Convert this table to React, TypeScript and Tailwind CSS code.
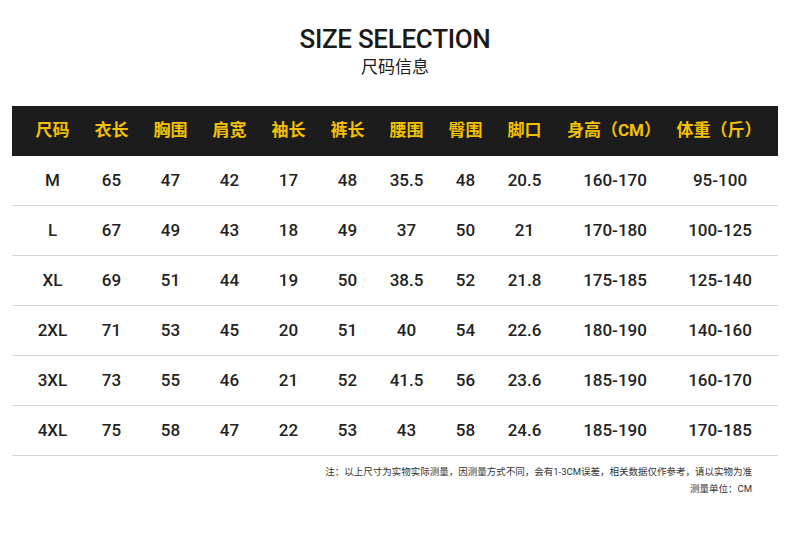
import React from "react";

const headers = ["尺码", "衣长", "胸围", "肩宽", "袖长", "裤长", "腰围", "臀围", "脚口", "身高（CM）", "体重（斤）"];
const rows = [
  ["M", "65", "47", "42", "17", "48", "35.5", "48", "20.5", "160-170", "95-100"],
  ["L", "67", "49", "43", "18", "49", "37", "50", "21", "170-180", "100-125"],
  ["XL", "69", "51", "44", "19", "50", "38.5", "52", "21.8", "175-185", "125-140"],
  ["2XL", "71", "53", "45", "20", "51", "40", "54", "22.6", "180-190", "140-160"],
  ["3XL", "73", "55", "46", "21", "52", "41.5", "56", "23.6", "185-190", "160-170"],
  ["4XL", "75", "58", "47", "22", "53", "43", "58", "24.6", "185-190", "170-185"],
];

const grid = "grid grid-cols-[59px_59px_59px_59px_59px_59px_59px_59px_59px_120px_90px] pl-[11px]";

export default function App() {
  return (
    <div className="w-[790px] h-[547px] bg-white" style={{ fontFamily: "Roboto, 'Noto Sans CJK SC', sans-serif" }}>
      <div className="flex flex-col items-center pt-[24px]">
        <div className="text-[26px] leading-[30px] font-medium tracking-[-0.3px] text-[#1a1a1a]">SIZE SELECTION</div>
        <div className="text-[17px] leading-[22px] text-[#1a1a1a] mt-[2px]">尺码信息</div>
      </div>
      <div className="mx-[12px] mt-[28px]">
        <div className={`${grid} h-[50px] items-center bg-[#1c1c1c]`}>
          {headers.map((h, i) => (
            <div key={i} className="text-center text-[17px] font-bold text-[#f4c100]">{h}</div>
          ))}
        </div>
        {rows.map((r, ri) => (
          <div key={ri} className={`${grid} h-[50px] items-center border-b border-[#d4d4d4]`}>
            {r.map((c, ci) => (
              <div key={ci} className={`text-center text-[17px] font-medium text-[#222] ${ci >= 9 ? "pl-[2px]" : ""}`}>{c}</div>
            ))}
          </div>
        ))}
        <div className="flex flex-col items-end pr-[26px] pt-[7px] text-[9.5px] leading-[17px] text-[#333]">
          <div>注：以上尺寸为实物实际测量，因测量方式不同，会有1-3CM误差，相关数据仅作参考，请以实物为准</div>
          <div>测量单位：CM</div>
        </div>
      </div>
    </div>
  );
}
